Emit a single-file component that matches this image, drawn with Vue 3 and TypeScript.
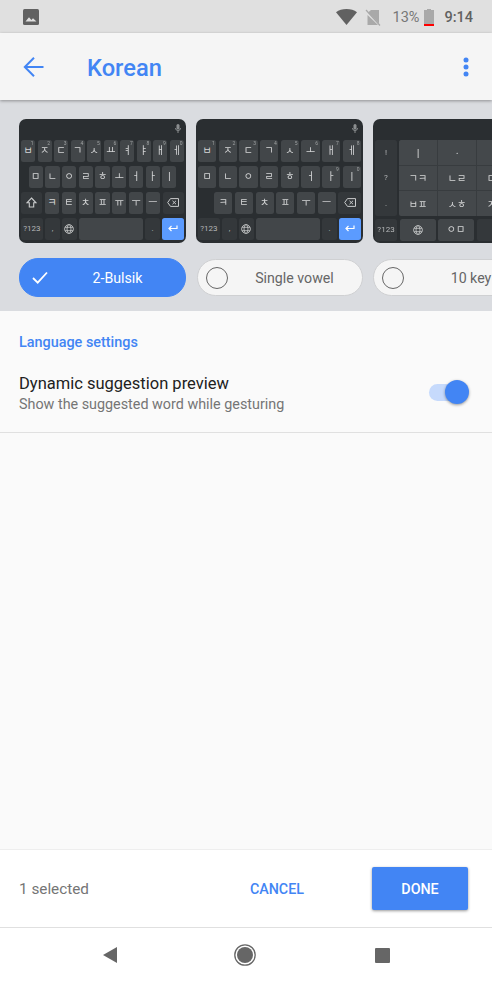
<script setup lang="ts">
type KeyKind = 'char' | 'func' | 'space' | 'enter' | 'spacer';
type Icon = 'shift' | 'del' | 'globe' | 'enter';
interface Key {
  label?: string;
  hint?: string;
  grow?: number;
  kind?: KeyKind;
  icon?: Icon;
}

const k = (label: string, hint?: string): Key => ({ label, hint });
const chars = (s: string): Key[] => s.split(' ').map((c) => k(c));

const bottomRow = (): Key[] => [
  { label: '?123', grow: 1.5, kind: 'func' },
  { label: ',', kind: 'func' },
  { icon: 'globe', kind: 'func' },
  { kind: 'space', grow: 4.4 },
  { label: '.', kind: 'func' },
  { icon: 'enter', kind: 'enter', grow: 1.5 },
];

// 2-Bulsik layout
const bulsik: Key[][] = [
  ['ㅂ', 'ㅈ', 'ㄷ', 'ㄱ', 'ㅅ', 'ㅛ', 'ㅕ', 'ㅑ', 'ㅐ', 'ㅔ'].map((c, i) => k(c, String((i + 1) % 10))),
  [{ kind: 'spacer', grow: 0.36 }, ...chars('ㅁ ㄴ ㅇ ㄹ ㅎ ㅗ ㅓ ㅏ ㅣ'), { kind: 'spacer', grow: 0.36 }],
  [{ icon: 'shift', kind: 'func', grow: 1.5 }, ...chars('ㅋ ㅌ ㅊ ㅍ ㅠ ㅜ ㅡ'), { icon: 'del', kind: 'func', grow: 1.5 }],
  bottomRow(),
];

// Single vowel layout
const singleVowel: Key[][] = [
  ['ㅂ', 'ㅈ', 'ㄷ', 'ㄱ', 'ㅅ', 'ㅗ', 'ㅐ', 'ㅔ'].map((c, i) => k(c, String(i + 1))),
  [...chars('ㅁ ㄴ ㅇ ㄹ ㅎ ㅓ'), k('ㅏ', '9'), k('ㅣ', '0')],
  [{ kind: 'spacer', grow: 0.75 }, ...chars('ㅋ ㅌ ㅊ ㅍ ㅜ ㅡ'), { icon: 'del', kind: 'func', grow: 1.25 }],
  bottomRow(),
];

const tenKeyGrid = ['ㅣ', 'ㆍ', 'ㅡ', 'ㄱㅋ', 'ㄴㄹ', 'ㄷㅌ', 'ㅂㅍ', 'ㅅㅎ', 'ㅈㅊ'];

const layouts = [
  { name: '2-Bulsik', selected: true },
  { name: 'Single vowel', selected: false },
  { name: '10 key', selected: false },
];
</script>

<template>
  <div class="screen">
    <div class="status-bar">
      <svg class="status-image" width="16" height="16" viewBox="0 0 16 16">
        <rect width="16" height="16" rx="1.5" fill="#616161" />
        <path d="M2.500 12.500 6 8.200l2.400 2.800 1.600-1.800 3.500 3.300z" fill="#e0e0e0" />
      </svg>
      <div class="status-right">
        <svg width="21" height="16" viewBox="0 0 21 16"><path d="M0 3.200C2.800 1 6.400 0 10.500 0S18.200 1 21 3.200L10.500 16z" fill="#616161" /></svg>
        <svg class="sim" width="16" height="17" viewBox="0 0 16 17">
          <path d="M6 1h8v13.500L3 3.500z" fill="#a9a9a9" />
          <path d="M2.500 6v10h10.500z" fill="#a9a9a9" />
          <path d="M1 1l14 15.500" stroke="#a9a9a9" stroke-width="1.200" />
        </svg>
        <span class="battery-text">13%</span>
        <span class="battery">
          <span class="battery-cap"></span>
          <span class="battery-body"></span>
          <span class="battery-low"></span>
        </span>
        <span class="clock">9:14</span>
      </div>
    </div>

    <header class="app-bar">
      <svg width="24" height="24" viewBox="0 0 24 24" class="back"><path d="M21.500 12H4M12 2.800 2.800 12l9.200 9.200" fill="none" stroke="#4285f4" stroke-width="2" /></svg>
      <h1 class="title">Korean</h1>
      <svg width="6" height="20" viewBox="0 0 6 20" class="more">
        <circle cx="3" cy="3" r="2.500" fill="#4285f4" />
        <circle cx="3" cy="10" r="2.500" fill="#4285f4" />
        <circle cx="3" cy="17" r="2.500" fill="#4285f4" />
      </svg>
    </header>

    <section class="picker">
      <div class="cards">
        <div v-for="(rows, ci) in [bulsik, singleVowel]" :key="ci" class="keyboard">
          <div class="kb-top">
            <svg width="6" height="9" viewBox="0 0 6 9"><rect x="1.500" width="3" height="5.500" rx="1.500" fill="#8b8e90" /><path d="M.5 4a2.500 2.500 0 0 0 5 0M3 6.500V9" fill="none" stroke="#8b8e90" /></svg>
          </div>
          <div v-for="(row, ri) in rows" :key="ri" class="kb-row">
            <div
              v-for="(key, i) in row"
              :key="i"
              class="key"
              :class="key.kind ?? 'char'"
              :style="{ flexGrow: key.grow ?? 1 }"
            >
              <span v-if="key.hint" class="hint">{{ key.hint }}</span>
              <span v-if="key.label" class="key-label">{{ key.label }}</span>
              <svg v-if="key.icon === 'shift'" width="11" height="11" viewBox="0 0 11 11"><path d="M5.500 1 10 5.800H7.700V10H3.300V5.800H1z" fill="none" stroke="#c9cbcc" stroke-width="1.100" /></svg>
              <svg v-if="key.icon === 'del'" width="12" height="9" viewBox="0 0 12 9"><path d="M3.500.6h8v7.800h-8L.7 4.500z" fill="none" stroke="#c9cbcc" /><path d="M5.500 2.800l3.500 3.400M9 2.800 5.500 6.200" stroke="#c9cbcc" /></svg>
              <svg v-if="key.icon === 'globe'" width="10" height="10" viewBox="0 0 10 10" fill="none" stroke="#c9cbcc" stroke-width=".8"><circle cx="5" cy="5" r="4.400" /><ellipse cx="5" cy="5" rx="2" ry="4.400" /><path d="M1 3.300h8M1 6.700h8" /></svg>
              <svg v-if="key.icon === 'enter'" width="10" height="7" viewBox="0 0 10 7" fill="none" stroke="#fff" stroke-width="1.200"><path d="M9 .5v3H1.500M3.500 1 1 3.500 3.500 6" /></svg>
            </div>
          </div>
        </div>

        <div class="keyboard ten-key">
          <div class="kb-top"></div>
          <div class="ten-body">
            <div class="ten-side">
              <span>!</span>
              <span>?</span>
              <span>.</span>
            </div>
            <div class="ten-grid">
              <span v-for="c in tenKeyGrid" :key="c">{{ c }}</span>
            </div>
          </div>
          <div class="ten-bottom">
            <div class="key func ten-sym"><span class="key-label">?123</span></div>
            <div class="key char ten-wide">
              <svg width="10" height="10" viewBox="0 0 10 10" fill="none" stroke="#c9cbcc" stroke-width=".8"><circle cx="5" cy="5" r="4.400" /><ellipse cx="5" cy="5" rx="2" ry="4.400" /><path d="M1 3.300h8M1 6.700h8" /></svg>
            </div>
            <div class="key char ten-wide"><span class="key-label">ㅇㅁ</span></div>
            <div class="key func ten-wide"></div>
          </div>
        </div>
      </div>

      <div class="pills">
        <div v-for="l in layouts" :key="l.name" class="pill" :class="{ selected: l.selected }">
          <svg v-if="l.selected" class="pill-check" width="16" height="13" viewBox="0 0 16 13"><path d="M1 7l4.700 4.700L15 1.500" fill="none" stroke="#fff" stroke-width="1.800" /></svg>
          <span v-else class="pill-radio"></span>
          <span class="pill-name">{{ l.name }}</span>
        </div>
      </div>
    </section>

    <section class="settings">
      <div class="section-title">Language settings</div>
      <div class="setting-row">
        <div class="setting-text">
          <div class="setting-name">Dynamic suggestion preview</div>
          <div class="setting-desc">Show the suggested word while gesturing</div>
        </div>
        <div class="switch">
          <span class="switch-track"></span>
          <span class="switch-thumb"></span>
        </div>
      </div>
    </section>

    <div class="filler"></div>

    <footer class="action-bar">
      <span class="selected-count">1 selected</span>
      <span class="cancel">CANCEL</span>
      <span class="done">DONE</span>
    </footer>

    <nav class="nav-bar">
      <svg width="14" height="16" viewBox="0 0 14 16"><path d="M14 0v16L0 8z" fill="#666" /></svg>
      <svg class="nav-home" width="22" height="22" viewBox="0 0 22 22"><circle cx="11" cy="11" r="10.200" fill="none" stroke="#666" stroke-width="1.300" /><circle cx="11" cy="11" r="8" fill="#666" /></svg>
      <span class="nav-square"></span>
    </nav>
  </div>
</template>

<style scoped>
.screen {
  width: 492px;
  height: 984px;
  display: flex;
  flex-direction: column;
  overflow: hidden;
  background: #fafafa;
  font-family: Roboto, 'Noto Sans CJK KR', sans-serif;
}

.status-bar {
  height: 33px;
  flex: none;
  box-sizing: border-box;
  display: flex;
  align-items: center;
  justify-content: space-between;
  padding: 1px 19px 0 23px;
  background: #e0e0e0;
}

.status-right {
  display: flex;
  align-items: center;
  color: #666;
}

.sim {
  margin-left: 8px;
}

.battery-text {
  margin-left: 12px;
  font-size: 14.5px;
  color: #777;
}

.battery {
  position: relative;
  margin-left: 5px;
  width: 10px;
  height: 17px;
  display: flex;
  flex-direction: column;
  align-items: center;
}

.battery-cap {
  width: 4px;
  height: 1.5px;
  background: #a9a9a9;
}

.battery-body {
  width: 10px;
  flex: 1;
  background: #a9a9a9;
}

.battery-low {
  width: 10px;
  height: 2px;
  background: #f00;
}

.clock {
  margin-left: 10px;
  font-size: 14.5px;
  font-weight: 500;
  color: #616161;
}

.app-bar {
  position: relative;
  z-index: 1;
  height: 67px;
  flex: none;
  display: flex;
  align-items: center;
  padding: 0 23px 0 22px;
  background: #f5f5f5;
  box-shadow: 0 1px 3px rgba(0, 0, 0, 0.35);
}

.title {
  margin: 0 0 0 41px;
  padding-top: 2px;
  font-size: 23.7px;
  font-weight: 500;
  color: #4285f4;
  flex: 1;
}

.picker {
  height: 211px;
  flex: none;
  padding: 19px 0 0 19px;
  background: #dadce0;
  overflow: hidden;
  box-sizing: border-box;
}

.cards {
  display: flex;
  gap: 10px;
  width: 600px;
}

/* the previews are scaled-down bitmaps in the real app, so they read a little soft */
.keyboard {
  width: 167px;
  height: 124px;
  flex: none;
  box-sizing: border-box;
  padding: 0 2px;
  border-radius: 7px;
  background: #2a2e31;
  filter: blur(0.3px);
}

.kb-top {
  height: 21px;
  box-sizing: border-box;
  display: flex;
  align-items: center;
  justify-content: flex-end;
  padding: 0 3px 3px 0;
}

.kb-row {
  display: flex;
  gap: 2.5px;
  height: 21.5px;
  margin-bottom: 4.5px;
}

.key {
  position: relative;
  flex: 1 1 0;
  min-width: 0;
  display: flex;
  align-items: center;
  justify-content: center;
  border-radius: 2.5px;
  color: #d5d6d7;
}

.char {
  background: #424649;
}

.func {
  background: #34383b;
}

.space {
  background: #424649;
}

.enter {
  background: #5b9bff;
}

.spacer {
  visibility: hidden;
}

.key-label {
  font-size: 10px;
  line-height: 1;
}

.func .key-label {
  font-size: 8px;
  color: #b5b7b8;
}

.hint {
  position: absolute;
  top: 1px;
  right: 1.5px;
  font-size: 5px;
  line-height: 1;
  color: #9fa2a3;
}

.ten-body {
  display: flex;
  gap: 2px;
  height: 76px;
}

.ten-side {
  width: 22px;
  flex: none;
  display: flex;
  flex-direction: column;
  justify-content: space-around;
  align-items: center;
  border-radius: 2.5px;
  background: #34383b;
  font-size: 8px;
  color: #b5b7b8;
}

.ten-grid {
  width: 116px;
  flex: none;
  display: grid;
  grid-template-columns: repeat(3, 1fr);
  grid-template-rows: repeat(3, 1fr);
  gap: 1px;
  border-radius: 2.5px;
  overflow: hidden;
  background: #383c3f;
}

.ten-grid span {
  display: flex;
  align-items: center;
  justify-content: center;
  background: #44484b;
  font-size: 10px;
  color: #d5d6d7;
}

.ten-bottom {
  display: flex;
  gap: 2.5px;
  height: 22px;
  margin-top: 3px;
}

.ten-sym {
  flex: none;
  width: 22px;
}

.ten-wide {
  flex: none;
  width: 36px;
}

.pills {
  display: flex;
  gap: 10.5px;
  width: 600px;
  margin-top: 15px;
}

.pill {
  position: relative;
  width: 166px;
  height: 37px;
  margin-top: 1px;
  padding-left: 30px;
  flex: none;
  box-sizing: border-box;
  display: flex;
  align-items: center;
  justify-content: center;
  border-radius: 19px;
  border: 1px solid #cfd0d2;
  background: #f5f5f5;
  font-size: 14.2px;
  color: #666;
}

.pill.selected {
  width: 167px;
  height: 39px;
  margin-top: 0;
  border-color: #4285f4;
  background: #4285f4;
  color: #fff;
}

.pill-check {
  position: absolute;
  left: 12px;
  top: 12px;
}

.pill-radio {
  position: absolute;
  left: 8px;
  top: 7px;
  width: 22px;
  height: 22px;
  box-sizing: border-box;
  border: 1.3px solid #666;
  border-radius: 50%;
}

.settings {
  height: 122px;
  flex: none;
  box-sizing: border-box;
  padding: 24px 23px 0 19px;
  border-bottom: 1.5px solid #e0e0e0;
  background: #fafafa;
}

.section-title {
  font-size: 14.4px;
  line-height: 16px;
  font-weight: 500;
  color: #4285f4;
}

.setting-row {
  display: flex;
  align-items: center;
  justify-content: space-between;
  margin-top: 22px;
}

.setting-name {
  font-size: 16.5px;
  line-height: 22px;
  color: #212121;
}

.setting-desc {
  font-size: 14.35px;
  line-height: 20px;
  color: #757575;
}

.switch {
  position: relative;
  width: 40px;
  height: 24px;
  margin-bottom: 4px;
}

.switch-track {
  position: absolute;
  left: 0;
  top: 3.500px;
  width: 34px;
  height: 17px;
  border-radius: 9px;
  background: #c6dafc;
}

.switch-thumb {
  position: absolute;
  right: 0;
  top: 0;
  width: 24px;
  height: 24px;
  border-radius: 50%;
  background: #4285f4;
  box-shadow: 0 1px 3px rgba(0, 0, 0, 0.4);
}

.filler {
  flex: 1;
}

.action-bar {
  height: 78px;
  flex: none;
  box-sizing: border-box;
  display: flex;
  align-items: center;
  padding: 0 24px 0 19px;
  border-top: 1px solid #eee;
  background: #fff;
}

.selected-count {
  flex: 1;
  font-size: 15.3px;
  color: #757575;
}

.cancel {
  margin-right: 68px;
  font-size: 14.3px;
  font-weight: 500;
  color: #4285f4;
}

.done {
  width: 96px;
  height: 43px;
  display: flex;
  align-items: center;
  justify-content: center;
  border-radius: 2px;
  background: #4285f4;
  box-shadow: 0 1px 3px rgba(0, 0, 0, 0.4);
  font-size: 14.3px;
  font-weight: 500;
  color: #fff;
}

.nav-bar {
  height: 57px;
  flex: none;
  box-sizing: border-box;
  display: flex;
  align-items: center;
  padding: 0 0 2px 103px;
  border-top: 1.5px solid #e0e0e0;
  background: #fff;
}

.nav-home {
  margin-left: 117px;
}

.nav-square {
  width: 15px;
  height: 15px;
  margin-left: 119px;
  border-radius: 1px;
  background: #666;
}
</style>
